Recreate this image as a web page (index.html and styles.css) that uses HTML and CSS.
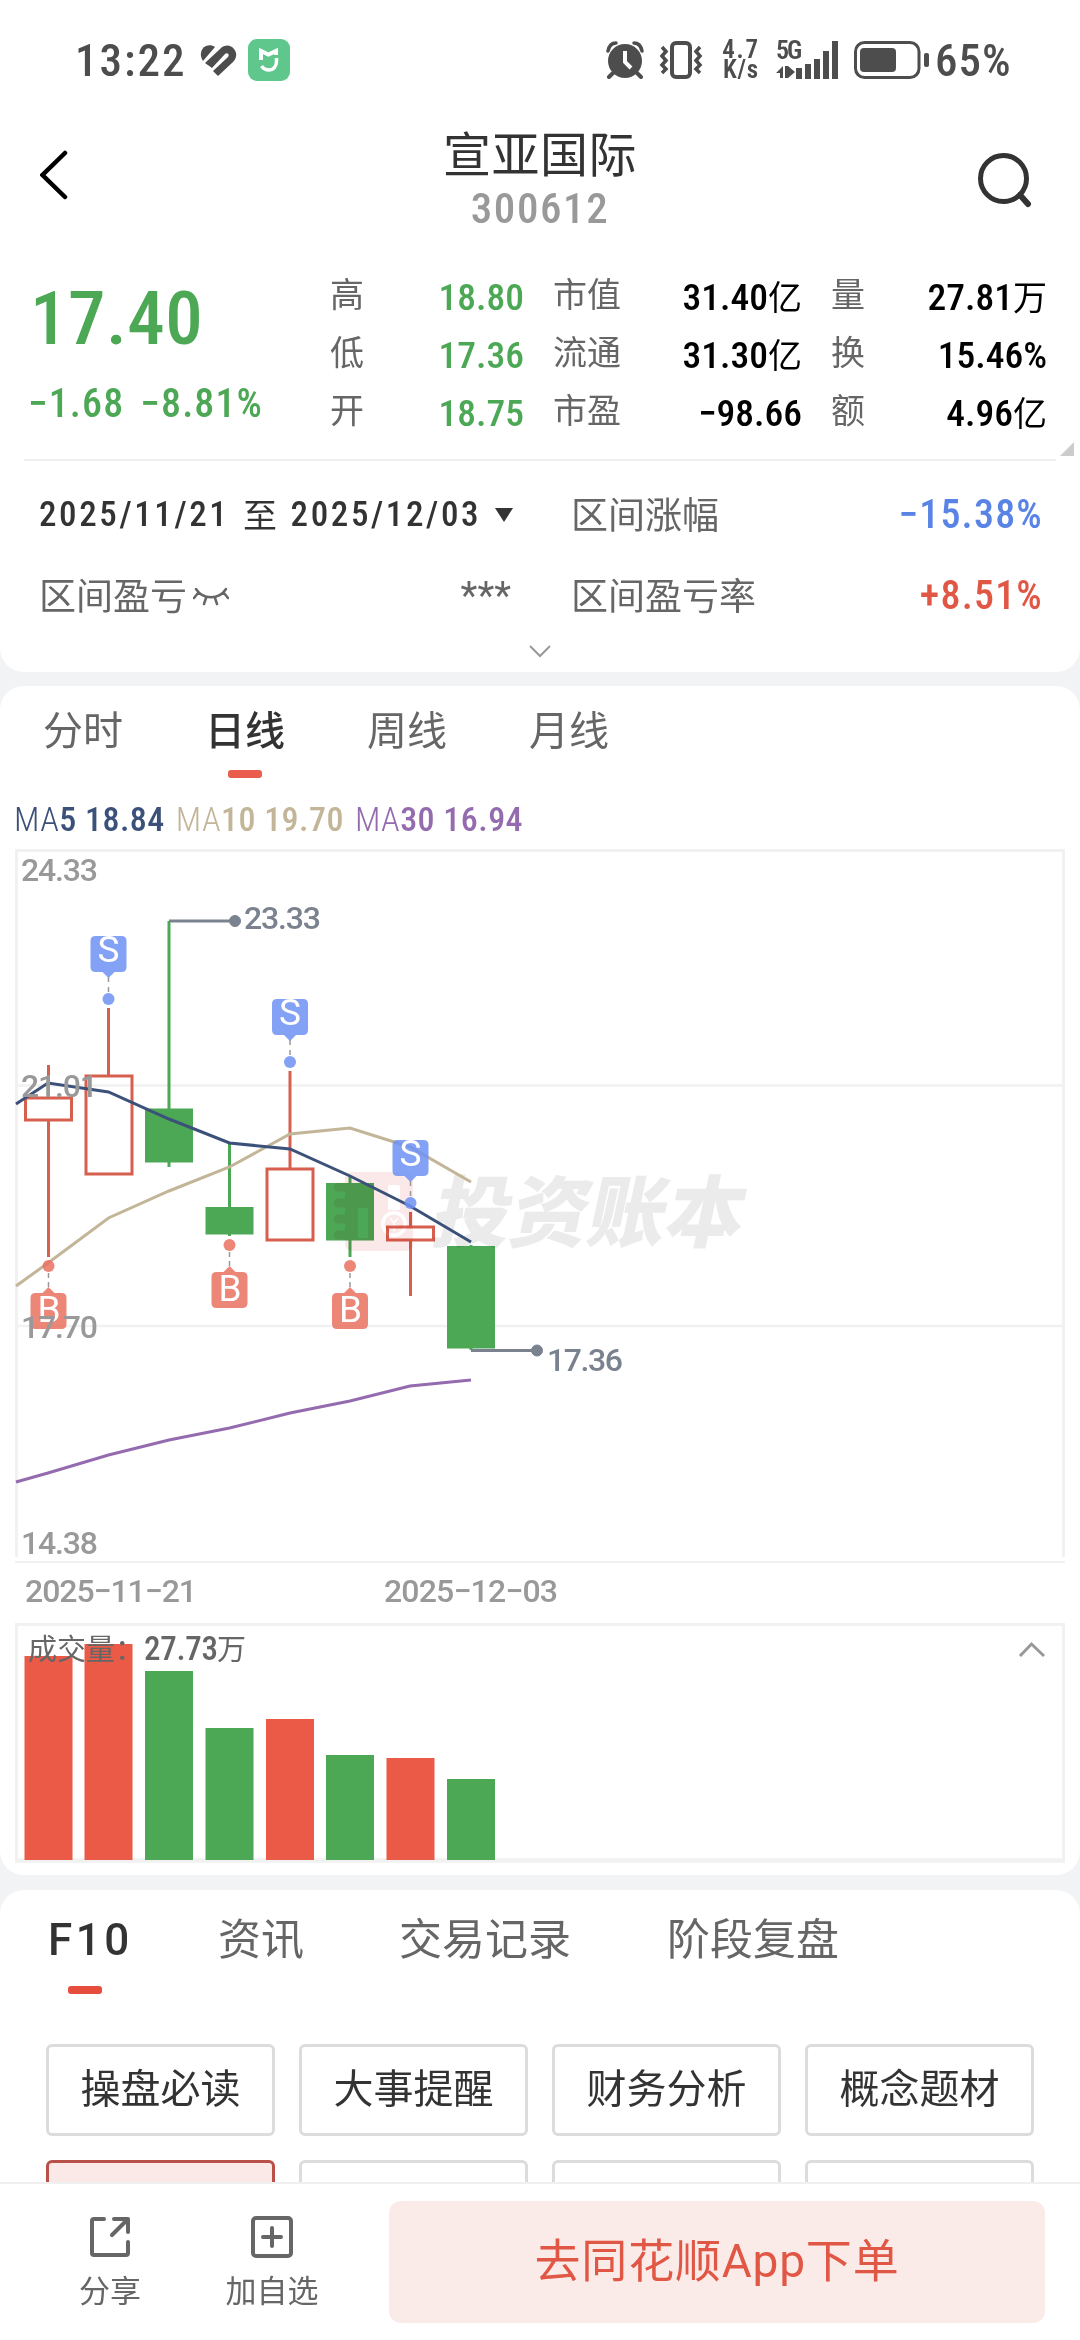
FILE: index.html
```html
<!DOCTYPE html>
<html lang="zh-CN">
<head>
    <meta charset="UTF-8">
    <meta name="viewport" content="width=device-width, initial-scale=1.0">
    <title>宣亚国际 300612</title>
    <link rel="stylesheet" href="styles.css">
</head>
<body>
    <div class="page">
        <section class="card summary">
            <div class="status-bar">
                <div class="status-left">
                    <span class="clock">13:22</span>
                    <svg class="icon-health" width="37" height="31" viewBox="0 0 37 31">
                        <path d="M3 16 C-1 10 1 3 6 1 C9 0 12 0 15 2 Z" fill="#4d4d4d"/>
                        <path d="M5 18 L20 4 C25 -1 31 0 34 4 C38 9 36 14 33 17 L18 31 L13 26 L28 12 C30 9 27 7 25 9 L12 23 Z" fill="#4d4d4d"/>
                    </svg>
                    <svg class="icon-mi" width="42" height="42" viewBox="0 0 42 42">
                        <rect width="42" height="42" rx="9" fill="#5fc78c"/>
                        <path d="M13 21 V12 L20.500 15.500 L28 12 V16" fill="none" stroke="#fff" stroke-width="4"/>
                        <path d="M28.500 19 V22 C28.500 28 25 31 21 31 C18 31 15.500 30 13.500 27" fill="none" stroke="#fff" stroke-width="3.500"/>
                    </svg>
                </div>
                <div class="status-right">
                    <svg width="38" height="38" viewBox="0 0 38 38">
                        <circle cx="19" cy="20" r="17" fill="#4d4d4d"/>
                        <path d="M2 10 C3 5 6 2 10 2 M36 10 C35 5 32 2 28 2" fill="none" stroke="#4d4d4d" stroke-width="3.500" stroke-linecap="round"/>
                        <path d="M7 32 L3 36 M31 32 L35 36" stroke="#4d4d4d" stroke-width="4" stroke-linecap="round"/>
                        <path d="M19 10 V21 L25 27" fill="none" stroke="#fff" stroke-width="4"/>
                    </svg>
                    <svg class="icon-vibrate" width="44" height="38" viewBox="0 0 44 38">
                        <rect x="13" y="2" width="18" height="34" rx="4" fill="none" stroke="#4d4d4d" stroke-width="4"/>
                        <path d="M3 6 L7 10.500 L3 15 L7 19.500 L3 24 L7 28 L3 32 M41 6 L37 10.500 L41 15 L37 19.500 L41 24 L37 28 L41 32" fill="none" stroke="#4d4d4d" stroke-width="3.500"/>
                    </svg>
                    <div class="speed"><span class="rate">4.7</span><span>K/s</span></div>
                    <div class="signal">
                        <span class="net">5G</span>
                        <svg width="63" height="38" viewBox="0 0 63 38">
                            <path d="M0 32 L7 25 V37 H4 V32 Z M9 25 H12 V37 H9 Z M12 25 L19 31 L12 37 Z" fill="#4d4d4d"/>
                            <path d="M23 27 V38 M32 23 V38 M41 18 V38 M50 10 V38 M59 0 V38" stroke="#4d4d4d" stroke-width="6"/>
                        </svg>
                    </div>
                    <svg class="icon-battery" width="76" height="38" viewBox="0 0 76 38">
                        <rect x="1.500" y="1.500" width="63.500" height="35" rx="9" fill="none" stroke="#4d4d4d" stroke-width="3"/>
                        <rect x="6" y="7" width="36" height="24" rx="4" fill="#4d4d4d"/>
                        <rect x="70" y="12" width="5" height="14" rx="2" fill="#4d4d4d"/>
                    </svg>
                    <span class="battery-text">65%</span>
                </div>
            </div>

            <header class="title-bar">
                <svg class="back" width="30" height="54" viewBox="0 0 30 54">
                    <path d="M25 5 L2.500 27 L25 49" fill="none" stroke="#000" stroke-width="4.500" stroke-linecap="round"/>
                </svg>
                <div class="title">
                    <h1>宣亚国际</h1>
                    <p>300612</p>
                </div>
                <svg class="search" width="56" height="56" viewBox="0 0 56 56">
                    <circle cx="26.500" cy="26.500" r="23" fill="none" stroke="#333" stroke-width="5"/>
                    <path d="M43 43 L51 52" stroke="#333" stroke-width="6" stroke-linecap="round"/>
                </svg>
            </header>

            <div class="quote">
                <div class="price-box">
                    <div class="price">17.40</div>
                    <div class="change"><span>−1.68</span><span>−8.81%</span></div>
                </div>
                <dl class="stats">
                    <dt>高</dt><dd class="down">18.80</dd><dt>市值</dt><dd>31.40<i>亿</i></dd><dt>量</dt><dd>27.81<i>万</i></dd>
                    <dt>低</dt><dd class="down">17.36</dd><dt>流通</dt><dd>31.30<i>亿</i></dd><dt>换</dt><dd>15.46%</dd>
                    <dt>开</dt><dd class="down">18.75</dd><dt>市盈</dt><dd>−98.66</dd><dt>额</dt><dd>4.96<i>亿</i></dd>
                </dl>
                <i class="corner"></i>
            </div>

            <div class="range">
                <div class="range-row">
                    <div class="range-left dates"><span class="d1">2025/11/21</span><span class="to">至</span><span class="d2">2025/12/03</span><i class="caret"></i></div>
                    <span class="range-label">区间涨幅</span>
                    <span class="range-value blue">−15.38%</span>
                </div>
                <div class="range-row">
                    <div class="range-left">
                        <span class="range-label">区间盈亏</span>
                        <svg class="eye" width="36" height="20" viewBox="0 0 36 20">
                            <path d="M3 3 C10 14 26 14 33 3 M5 7 L1 12 M13 12 L11 18 M22 12 L24 18 M31 7 L35 12" fill="none" stroke="#666" stroke-width="2.500" stroke-linecap="round"/>
                        </svg>
                        <span class="stars">***</span>
                    </div>
                    <span class="range-label">区间盈亏率</span>
                    <span class="range-value red">+8.51%</span>
                </div>
            </div>
            <svg class="expand" width="24" height="14" viewBox="0 0 24 14">
                <path d="M2 2 L12 12 L22 2" fill="none" stroke="#999" stroke-width="2"/>
            </svg>
        </section>

        <section class="card chart-card">
            <nav class="tabs period-tabs">
                <a>分时</a>
                <a class="active">日线</a>
                <a>周线</a>
                <a>月线</a>
            </nav>
            <div class="ma-line">
                <span class="ma5"><i>MA</i>5 18.84</span>
                <span class="ma10"><i>MA</i>10 19.70</span>
                <span class="ma30"><i>MA</i>30 16.94</span>
            </div>

            <svg class="chart" width="1080" height="1026" viewBox="0 849 1080 1026">
                <defs>
                    <g id="sell">
                        <path d="M0 41 V60" stroke="#999" stroke-width="1.500" stroke-dasharray="5 5"/>
                        <path d="M-13 0 H13 Q18 0 18 5 V31 Q18 36 13 36 H6 L0 42 L-6 36 H-13 Q-18 36 -18 31 V5 Q-18 0 -13 0 Z"/>
                        <circle cy="63" r="6"/>
                    </g>
                    <g id="buy">
                        <path d="M0 7 V22" stroke="#999" stroke-width="1.500" stroke-dasharray="5 4"/>
                        <path d="M-13 27 H-6 L0 21 L6 27 H13 Q18 27 18 32 V58 Q18 63 13 63 H-13 Q-18 63 -18 58 V32 Q-18 27 -13 27 Z"/>
                        <circle r="6"/>
                    </g>
                </defs>

                <!-- frame and grid -->
                <g fill="none" stroke="#f1f1f1" stroke-width="3">
                    <path d="M16.500 1557 V850.500 H1063.500 V1557"/>
                    <path d="M18 1085.500 H1062 M18 1326 H1062" stroke-width="2.500"/>
                    <path d="M15 1562 H1065" stroke-width="2"/>
                    <path d="M16.500 1861 V1624.500 H1063.500 V1861"/>
                    <path d="M15 1860.500 H1065" stroke-width="4.500"/>
                </g>

                <!-- candles -->
                <g fill="none" stroke="#d75f4e" stroke-width="3">
                    <path d="M48.500 1065 V1098 M48.500 1120 V1257"/>
                    <rect x="25.500" y="1098" width="46" height="22"/>
                    <path d="M108.500 1008 V1076"/>
                    <rect x="86" y="1076" width="46" height="98"/>
                    <path d="M290 1071 V1169"/>
                    <rect x="267" y="1169" width="46" height="71"/>
                    <path d="M410.500 1212 V1227 M410.500 1240 V1296"/>
                    <rect x="387.500" y="1227" width="46" height="13"/>
                </g>
                <g fill="#4da855">
                    <path d="M167.500 921 h3 v246 h-3 Z M145 1108.500 h48 v54 h-48 Z"/>
                    <path d="M228 1143 h3 v93 h-3 Z M205.500 1207 h48 v27.500 h-48 Z"/>
                    <path d="M348.500 1177 h3 v80 h-3 Z M326 1183 h48 v57.500 h-48 Z"/>
                    <path d="M469.500 1245 h3 v105 h-3 Z M447 1246 h48 v102.500 h-48 Z"/>
                </g>

                <!-- watermark -->
                <g class="watermark">
                    <path fill="#fae9e8" fill-rule="evenodd" d="M353 1172 H405 Q413 1172 413 1180 V1243 Q413 1251 405 1251 H353 Q345 1251 345 1243 V1180 Q345 1172 353 1172 Z M388 1187 Q388 1185 390 1185 H398 Q400 1185 400 1187 V1210 H388 Z M358 1208 H368 V1238 H358 Z M394 1211 A13 13 0 1 0 394.100 1211 Z"/>
                    <circle cx="394" cy="1224" r="9.500" fill="#fae9e8"/>
                    <path d="M338 1187 H351 M338 1203 H351 M338 1219 H351 M338 1235 H351" stroke="#fae9e8" stroke-width="9" stroke-linecap="round"/>
                    <path d="M390 1218 L394 1223 L398 1218 M394 1223 V1231 M389 1226 H399" fill="none" stroke="#fff" stroke-width="1.500"/>
                    <text transform="translate(429 1241) skewX(-12)" textLength="311">投资账本</text>
                </g>

                <!-- moving averages -->
                <g fill="none" stroke-width="3">
                    <path stroke="#c3b598" d="M16 1286 L48 1263 L108.500 1218 L169 1191 L229.500 1167 L290 1134 L350 1128 L410 1147 L471 1182"/>
                    <path stroke="#3c5179" d="M16 1104 L48 1083 L108.500 1092 L169 1119 L229.500 1143 L290 1149 L350 1176 L410 1206 L471 1242"/>
                    <path stroke="#946bae" d="M16 1482 L48 1473 L108.500 1455 L169 1440 L229.500 1428 L290 1413 L350 1401 L410 1386 L471 1380"/>
                </g>

                <!-- trade marks -->
                <g fill="#6d92f5" fill-opacity="0.85">
                    <use href="#sell" x="108.500" y="936"/>
                    <use href="#sell" x="290" y="999"/>
                    <use href="#sell" x="410.500" y="1140"/>
                </g>
                <g fill="#e9715f" fill-opacity="0.85">
                    <use href="#buy" x="48.500" y="1266"/>
                    <use href="#buy" x="229.500" y="1245"/>
                    <use href="#buy" x="350" y="1266"/>
                </g>
                <g class="mark-text">
                    <text x="108.500" y="962">S</text>
                    <text x="290" y="1025">S</text>
                    <text x="410.500" y="1166">S</text>
                    <text x="49" y="1322">B</text>
                    <text x="230" y="1301">B</text>
                    <text x="350.500" y="1322">B</text>
                </g>

                <!-- high and low callouts -->
                <g stroke="#7a8290" fill="#7a8290">
                    <path d="M169 921 H235 M471 1350.500 H537" stroke-width="3"/>
                    <circle cx="235" cy="921" r="5.500"/>
                    <circle cx="537" cy="1350.500" r="5.500"/>
                </g>
                <g class="axis callout">
                    <text x="244" y="929" textLength="77">23.33</text>
                    <text x="547" y="1371" textLength="76">17.36</text>
                </g>

                <g class="axis">
                    <text x="21" y="881" textLength="77">24.33</text>
                    <text x="21" y="1097" textLength="77">21.01</text>
                    <text x="21" y="1338" textLength="77">17.70</text>
                    <text x="21" y="1554" textLength="77">14.38</text>
                    <text x="25" y="1602" textLength="172">2025−11−21</text>
                    <text x="384" y="1602" textLength="174">2025−12−03</text>
                </g>

                <!-- volume -->
                <g fill="#ea5a47">
                    <path d="M24.500 1656 h48 V1860 h-48 Z M84.500 1644 h48 V1860 h-48 Z M266 1719 h48 V1860 h-48 Z M386.500 1758 h48 V1860 h-48 Z"/>
                </g>
                <g fill="#4da855">
                    <path d="M145 1671 h48 V1860 h-48 Z M205.500 1728 h48 V1860 h-48 Z M326 1755 h48 V1860 h-48 Z M447 1779 h48 V1860 h-48 Z"/>
                </g>
                <g class="volume-text">
                    <text x="28" y="1660">成交量：</text>
                    <text class="num" x="144" y="1660" textLength="74">27.73</text>
                    <text x="217" y="1660">万</text>
                </g>
                <path d="M1020 1656 L1031.500 1644 L1044 1656" fill="none" stroke="#999" stroke-width="3"/>
            </svg>
        </section>

        <section class="card f10">
            <nav class="tabs info-tabs">
                <a class="active">F10</a>
                <a>资讯</a>
                <a>交易记录</a>
                <a>阶段复盘</a>
            </nav>
            <div class="chips">
                <button>操盘必读</button>
                <button>大事提醒</button>
                <button>财务分析</button>
                <button>概念题材</button>
                <button class="selected"></button>
                <button></button>
                <button></button>
                <button></button>
            </div>
        </section>

        <footer class="bottom-bar">
            <div class="action">
                <svg width="44" height="44" viewBox="0 0 44 44">
                    <path d="M16 4 H6 Q4 4 4 6 V38 Q4 40 6 40 H38 Q40 40 40 38 V27" fill="none" stroke="#666" stroke-width="4" stroke-linecap="round"/>
                    <path d="M26 4 H40 V17 M39 5 L24 20" fill="none" stroke="#666" stroke-width="4" stroke-linecap="round" stroke-linejoin="round"/>
                </svg>
                <span>分享</span>
            </div>
            <div class="action">
                <svg width="44" height="44" viewBox="0 0 44 44">
                    <rect x="3" y="3" width="38" height="38" rx="3" fill="none" stroke="#666" stroke-width="4"/>
                    <path d="M22 13 V31 M13 22 H31" stroke="#666" stroke-width="4" stroke-linecap="round"/>
                </svg>
                <span>加自选</span>
            </div>
            <button class="order">去同花顺App下单</button>
        </footer>
    </div>
</body>
</html>
```
FILE: styles.css
```css
:root {
    --text: #333;
    --sub: #666;
    --muted: #999;
    --green: #4da855;
    --red: #e15745;
    --status: #4d4d4d;
    --cjk: "Noto Sans CJK SC", sans-serif;
}

* {
    margin: 0;
    padding: 0;
    box-sizing: border-box;
}

body {
    width: 1080px;
    height: 2340px;
    overflow: hidden;
    background: #f2f3f5;
    font-family: Roboto, var(--cjk);
    font-stretch: 87.5%;
    color: var(--text);
    white-space: nowrap;
}

.page {
    display: flex;
    flex-direction: column;
    height: 2340px;
}

.card {
    background: #fff;
    border-radius: 24px;
    flex: none;
}

button {
    font-family: inherit;
}

/* status bar */
.summary {
    height: 672px;
    border-radius: 0 0 24px 24px;
    margin-bottom: 14px;
}

.status-bar {
    display: flex;
    justify-content: space-between;
    align-items: center;
    height: 120px;
    padding: 0 65px 0 75px;
    color: var(--status);
    font-weight: 500;
}

.status-left,
.status-right {
    display: flex;
    align-items: center;
}

.clock {
    width: 125px;
    font-size: 45px;
    letter-spacing: 2px;
}

.icon-mi {
    margin-left: 11px;
}

.icon-vibrate {
    margin-left: 15px;
}

.speed {
    display: flex;
    flex-direction: column;
    width: 42px;
    margin-left: 17px;
    font-size: 25px;
    font-weight: 600;
    line-height: 20px;
    text-align: center;
    letter-spacing: 0.8px;
}

.rate {
    letter-spacing: 1.8px;
}

.signal {
    position: relative;
    width: 63px;
    height: 38px;
    margin-left: 14px;
}

.net {
    position: absolute;
    left: 0;
    top: -1px;
    font-size: 26px;
    font-weight: 600;
    line-height: 20px;
    letter-spacing: -2px;
}

.icon-battery {
    margin-left: 15px;
}

.battery-text {
    width: 80px;
    margin-left: 5px;
    font-size: 45px;
    letter-spacing: 1px;
}

/* title */
.title-bar {
    display: flex;
    justify-content: space-between;
    height: 128px;
    padding: 0 47px 0 40px;
}

.back {
    margin-top: 28px;
}

.title {
    margin-left: 33px;
    text-align: center;
}

.title h1 {
    font-size: 48px;
    font-weight: 400;
    line-height: 58px;
    margin-top: 7px;
    letter-spacing: 0.5px;
}

.title p {
    margin-top: -2px;
    font-size: 43px;
    font-weight: 500;
    line-height: 50px;
    letter-spacing: 1.6px;
    color: var(--muted);
}

.search {
    margin-top: 32px;
}

/* quote */
.quote {
    position: relative;
    display: flex;
    height: 211px;
    padding: 18px 33px 0 30px;
}

.quote::after {
    content: "";
    position: absolute;
    left: 24px;
    right: 24px;
    bottom: -2px;
    height: 2px;
    background: #f0f0f0;
}

.price-box {
    width: 300px;
    color: var(--green);
    font-weight: 500;
}

.price {
    font-size: 75px;
    line-height: 80px;
    margin-top: 12px;
    letter-spacing: 0.5px;
}

.change {
    display: flex;
    gap: 16px;
    margin: 22px 0 0 -2px;
    font-size: 40px;
    font-weight: 480;
    line-height: 48px;
    letter-spacing: 1.1px;
}

.stats {
    display: grid;
    grid-template-columns: 70px 124px 98px 180px 96px 149px;
    grid-auto-rows: 58px;
    line-height: 58px;
}

.stats dt {
    font-size: 34px;
    color: var(--sub);
}

.stats dt:nth-of-type(3n + 2),
.stats dt:nth-of-type(3n) {
    padding-left: 29px;
}

.stats dd {
    font-size: 37.5px;
    font-weight: 500;
    color: #000;
    text-align: right;
    padding-top: 2px;
}

.stats i {
    font-size: 34px;
    font-style: normal;
    font-weight: 400;
}

.stats .down {
    color: var(--green);
}

.corner {
    position: absolute;
    right: 6px;
    bottom: 3px;
    border-left: 14px solid transparent;
    border-bottom: 14px solid #ccc;
}

/* range */
.range {
    padding: 15px 37px 0 39px;
}

.range-row {
    display: flex;
    align-items: center;
    height: 81px;
}

.range-left {
    display: flex;
    align-items: center;
    width: 532px;
}

.dates {
    font-size: 35px;
    font-weight: 480;
    letter-spacing: 2.6px;
}

.d1 {
    width: 204px;
}

.to {
    margin-top: -3px;
    font-size: 34px;
    font-weight: 400;
}

.d2 {
    width: 204px;
    margin-left: 11px;
}

.caret {
    border: 9px solid transparent;
    border-top: 14px solid var(--text);
    border-bottom: 0;
}

.range-label {
    margin-top: -4px;
    font-size: 37px;
    color: var(--sub);
}

.eye {
    margin-left: 6px;
}

.stars {
    margin-left: auto;
    margin-right: 60px;
    font-size: 39px;
    color: var(--sub);
}

.range-value {
    margin-left: auto;
    font-size: 40px;
    font-weight: 480;
    letter-spacing: 1.2px;
}

.blue { color: #5a83e6; }
.red { color: var(--red); }

.expand {
    display: block;
    margin: 8px auto 0;
}

/* tabs */
.tabs {
    display: flex;
}

.tabs a {
    position: relative;
    color: var(--sub);
}

.tabs .active {
    color: var(--text);
    font-weight: 500;
}

.tabs .active::after {
    content: "";
    position: absolute;
    left: 50%;
    width: 34px;
    height: 8px;
    margin-left: -17px;
    border-radius: 3px;
    background: #ea5d4c;
}

.chart-card {
    height: 1189px;
    margin-bottom: 15px;
}

.period-tabs {
    gap: 82px;
    height: 107px;
    padding-left: 43px;
    font-size: 40px;
    line-height: 92px;
}

.period-tabs .active::after {
    top: 84px;
}

.ma-line {
    display: flex;
    gap: 11px;
    height: 56px;
    padding-left: 14px;
    font-size: 34px;
    font-weight: 500;
    line-height: 52px;
    letter-spacing: 0.45px;
}

.ma-line i {
    font-style: normal;
    font-weight: 350;
}

.ma5 { color: #3c5179; }
.ma10 { color: #c3b598; }
.ma30 { color: #946bae; }

.chart {
    display: block;
}

.axis text {
    font-size: 32px;
    font-weight: 470;
    font-stretch: 88%;
    fill: var(--muted);
}

.axis.callout text {
    fill: #7a8290;
}

.mark-text text {
    font-size: 37px;
    font-weight: 400;
    font-stretch: 92%;
    fill: #fff;
    text-anchor: middle;
}

.volume-text text {
    font-size: 29px;
    fill: var(--sub);
}

.volume-text .num {
    font-size: 33px;
    font-weight: 500;
}

.watermark {
    mix-blend-mode: multiply;
}

.watermark text {
    font-family: var(--cjk);
    font-size: 78px;
    font-weight: 900;
    fill: #ebebeb;
}

/* f10 */
.f10 {
    height: 292px;
    overflow: hidden;
    border-radius: 24px 24px 0 0;
}

.info-tabs {
    height: 154px;
    padding-left: 48px;
    font-size: 43px;
    line-height: 100px;
}

.info-tabs a:nth-child(1) { width: 170px; font-size: 44px; font-stretch: 92%; letter-spacing: 3.5px; }
.info-tabs a:nth-child(2) { width: 181px; }
.info-tabs a:nth-child(3) { width: 268px; }

.info-tabs .active::after {
    left: 37px;
    top: 96px;
    background: #e74d3c;
}

.chips {
    display: grid;
    grid-template-columns: repeat(4, 229px);
    gap: 24px;
    padding-left: 46px;
}

.chips button {
    height: 92px;
    padding-bottom: 9px;
    border: 3px solid #dcdcdc;
    border-radius: 6px;
    background: #fff;
    color: var(--text);
    font-size: 40px;
}

.chips .selected {
    border-color: #b9504a;
    background: #fbe9e7;
}

/* bottom bar */
.bottom-bar {
    display: flex;
    flex: 1;
    border-top: 2px solid #f0f0f0;
    background: #fff;
    padding-left: 29px;
}

.action {
    display: flex;
    flex-direction: column;
    align-items: center;
    width: 162px;
    padding-top: 31px;
    font-size: 31px;
    line-height: 40px;
    color: var(--sub);
}

.action span {
    margin-top: 13px;
}

.order {
    width: 656px;
    height: 122px;
    margin: 17px 0 0 36px;
    padding-bottom: 11px;
    border: none;
    border-radius: 12px;
    background: #fbebe8;
    color: var(--red);
    font-size: 46px;
    font-stretch: 100%;
    letter-spacing: 0.8px;
}
```
